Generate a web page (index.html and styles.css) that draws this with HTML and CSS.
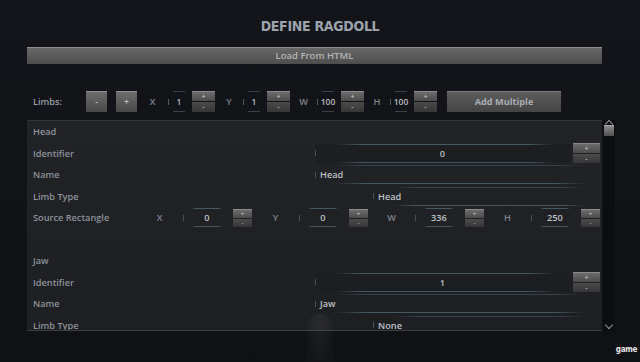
FILE: index.html
```html
<!DOCTYPE html>
<html lang="en">
<head>
    <meta charset="UTF-8">
    <meta name="viewport" content="width=device-width, initial-scale=1.0">
    <title>Define Ragdoll</title>
    <link rel="stylesheet" href="styles.css">
</head>
<body>
    <div class="screen">
        <h1 class="title">DEFINE RAGDOLL</h1>
        <div class="loadButton">Load From HTML</div>

        <div class="limbsRow">
            <span class="limbsLabel">Limbs:</span>
            <div class="squareButton">-</div>
            <div class="squareButton second">+</div>
            <span class="axis axisX">X</span>
            <div class="miniField">1</div>
            <div class="spin small"><div class="up">+</div><div class="down">-</div></div>
            <span class="axis axisY">Y</span>
            <div class="miniField">1</div>
            <div class="spin small"><div class="up">+</div><div class="down">-</div></div>
            <span class="axis axisW">W</span>
            <div class="miniField">100</div>
            <div class="spin small"><div class="up">+</div><div class="down">-</div></div>
            <span class="axis axisH">H</span>
            <div class="miniField">100</div>
            <div class="spin small"><div class="up">+</div><div class="down">-</div></div>
            <div class="addButton">Add Multiple</div>
        </div>

        <div class="editor">
            <div class="panel">
                <div class="row"><span class="label">Head</span></div>
                <div class="row">
                    <span class="label">Identifier</span>
                    <div class="field number">0</div>
                    <div class="spin tall"><div class="up">+</div><div class="down">-</div></div>
                </div>
                <div class="row">
                    <span class="label">Name</span>
                    <div class="field text">Head</div>
                </div>
                <div class="row">
                    <span class="label">Limb Type</span>
                    <div class="field text indent">Head</div>
                </div>
                <div class="row">
                    <span class="label short">Source Rectangle</span>
                    <span class="rectAxis">X</span>
                    <div class="field rect">0</div>
                    <div class="spin rectSpin"><div class="up">+</div><div class="down">-</div></div>
                    <span class="rectAxis">Y</span>
                    <div class="field rect">0</div>
                    <div class="spin rectSpin"><div class="up">+</div><div class="down">-</div></div>
                    <span class="rectAxis">W</span>
                    <div class="field rect">336</div>
                    <div class="spin rectSpin"><div class="up">+</div><div class="down">-</div></div>
                    <span class="rectAxis">H</span>
                    <div class="field rect">250</div>
                    <div class="spin rectSpin"><div class="up">+</div><div class="down">-</div></div>
                </div>
                <div class="row"></div>

                <div class="row"><span class="label">Jaw</span></div>
                <div class="row">
                    <span class="label">Identifier</span>
                    <div class="field number">1</div>
                    <div class="spin tall"><div class="up">+</div><div class="down">-</div></div>
                </div>
                <div class="row">
                    <span class="label">Name</span>
                    <div class="field text">Jaw</div>
                </div>
                <div class="row">
                    <span class="label">Limb Type</span>
                    <div class="field text indent">None</div>
                </div>
            </div>

            <div class="scrollbar">
                <div class="arrow upArrow"></div>
                <div class="thumb"></div>
                <div class="arrow downArrow"></div>
            </div>
        </div>

        <div class="ghost"></div>
        <div class="watermark">game</div>
    </div>
</body>
</html>
```

FILE: styles.css
```css
html, body {
    margin: 0;
    background-color: #111216;
}

.screen {
    position: relative;
    width: 640px;
    height: 362px;
    overflow: hidden;
    background: linear-gradient(#14151a, #101115);
    font-family: "Open Sans", "Liberation Sans", sans-serif;
    font-weight: 600;
    font-size: 9.2px;
    color: #8d939b;
}

.title {
    margin: 16px 0 0 0;
    height: 20px;
    line-height: 20px;
    text-align: center;
    font-family: "DejaVu Sans Condensed", "DejaVu Sans", sans-serif;
    font-weight: bold;
    font-size: 14px;
    letter-spacing: -0.3px;
    color: #9ca3ad;
}

.loadButton {
    margin: 11px 0 0 27px;
    width: 575px;
    height: 16px;
    line-height: 16px;
    border-top: 1px solid #8d8d8d;
    background: linear-gradient(#676767, #4d4d4d);
    text-align: center;
    font-size: 9.5px;
    color: #b4b4b4;
}

/* limbs row */
.limbsRow {
    display: flex;
    align-items: center;
    height: 21px;
    margin-top: 27px;
    padding-left: 33px;
}

.limbsLabel {
    width: 53px;
    flex: none;
    color: #979da5;
}

.squareButton {
    width: 21px;
    height: 20px;
    line-height: 20px;
    border-top: 1px solid #8e8e8e;
    background: linear-gradient(#6d6d6d, #474747);
    text-align: center;
    color: #c2c2c2;
    font-size: 8px;
}

.squareButton.second {
    margin-left: 9px;
}

.axis {
    flex: none;
    text-align: center;
    color: #7f858d;
}

.axisX { width: 31px; }
.axisY { width: 28px; }
.axisW { width: 27px; }
.axisH { width: 26px; }

.miniField {
    position: relative;
    width: 22px;
    height: 21px;
    flex: none;
    line-height: 21px;
    text-align: center;
    font-size: 8.5px;
    color: #b9bdc3;
    background: linear-gradient(#55585d, #55585d) no-repeat 0 center / 1px 6px;
}

.miniField::before,
.miniField::after {
    content: "";
    position: absolute;
    left: 5px;
    right: 5px;
    height: 1px;
    background: #3b4046;
}

.miniField::before { top: 0; }
.miniField::after { bottom: 0; }

.spin {
    display: flex;
    flex-direction: column;
    gap: 1px;
    flex: none;
    text-align: center;
    color: #c4c4c4;
    font-size: 7px;
}

.spin .up {
    border-top: 1px solid #8a8a8a;
    background: linear-gradient(#6c6c6c, #4b4b4b);
}

.spin .down {
    background: linear-gradient(#4b4b4b, #363636);
}

.spin.small {
    width: 23px;
    margin-left: 2px;
}

.spin.small .up,
.spin.small .down {
    height: 10px;
    line-height: 10px;
}

.spin.small .up { height: 9px; }

.addButton {
    margin-left: 10px;
    width: 114px;
    height: 20px;
    line-height: 20px;
    flex: none;
    border-top: 1px solid #7b7b7b;
    background: linear-gradient(#5d5d5d, #444444);
    text-align: center;
    font-weight: 700;
    color: #a9adb3;
}

/* editor panel */
.editor {
    display: flex;
    margin: 8px 0 0 27px;
    height: 211px;
}

.panel {
    width: 575px;
    padding: 0 2px 0 6px;
    box-sizing: border-box;
    overflow: hidden;
    background: linear-gradient(#222327, #1e1f22);
    border-top: 1px solid #33353a;
    border-bottom: 1px solid #3a3c40;
}

.row {
    display: flex;
    align-items: center;
    height: 21.5px;
}

.label {
    width: 282px;
    flex: none;
}

.label.short {
    width: 103px;
}

.field {
    position: relative;
    height: 19px;
    line-height: 19px;
    box-sizing: border-box;
    color: #bcc0c6;
    background: linear-gradient(#4d5056, #4d5056) no-repeat 0 center / 1px 6px;
}

.field::before,
.field::after {
    content: "";
    position: absolute;
    left: 20px;
    right: 15px;
    height: 1px;
    background: linear-gradient(to right, rgba(68, 88, 98, 0), #445862 12%, #445862 88%, rgba(68, 88, 98, 0));
}

.field::before { top: 0; }
.field::after { bottom: 0; }

.field.number {
    flex: 1;
    text-align: center;
    background-color: #1d1e21;
}

.field.text {
    flex: 1;
    padding-left: 5px;
}

.field.text::before {
    opacity: 0.6;
}

.field.indent {
    margin-left: 58px;
}

.spin.tall {
    width: 27px;
    margin-left: 3px;
}

.spin.tall .up,
.spin.tall .down {
    height: 9px;
    line-height: 9px;
}

.rectAxis {
    width: 47px;
    flex: none;
    text-align: center;
    color: #7f858d;
}

.field.rect {
    width: 48px;
    flex: none;
    text-align: center;
}

.field.rect::before,
.field.rect::after {
    left: 9px;
    right: 9px;
}

.spin.rectSpin {
    width: 19px;
    margin-left: 2px;
}

.spin.rectSpin .up,
.spin.rectSpin .down {
    height: 8px;
    line-height: 8px;
    font-size: 6px;
}

/* scrollbar */
.scrollbar {
    position: relative;
    width: 12px;
    margin-left: 1px;
    background: #0c0d10;
}

.arrow {
    position: absolute;
    left: 3px;
    width: 5px;
    height: 5px;
    border-left: 1px solid #8f9399;
    border-top: 1px solid #8f9399;
}

.upArrow {
    top: 1px;
    transform: rotate(45deg);
}

.downArrow {
    bottom: 3px;
    transform: rotate(225deg);
}

.thumb {
    margin: 5px 1px 0 1px;
    height: 10px;
    border-top: 1px solid #a5a5a5;
    background: linear-gradient(#8b8b8b, #4f4f4f);
}

/* overlays */
.ghost {
    position: absolute;
    left: 307px;
    top: 314px;
    width: 26px;
    height: 52px;
    border-radius: 13px 13px 6px 6px;
    background: radial-gradient(ellipse at 50% 30%, rgba(255, 255, 255, 0.06), rgba(255, 255, 255, 0.015) 70%);
}

.watermark {
    position: absolute;
    right: 3px;
    bottom: 8px;
    font-family: "DejaVu Sans Condensed", sans-serif;
    font-weight: bold;
    font-size: 8px;
    letter-spacing: -0.3px;
    color: #e6e6e6;
}
```
